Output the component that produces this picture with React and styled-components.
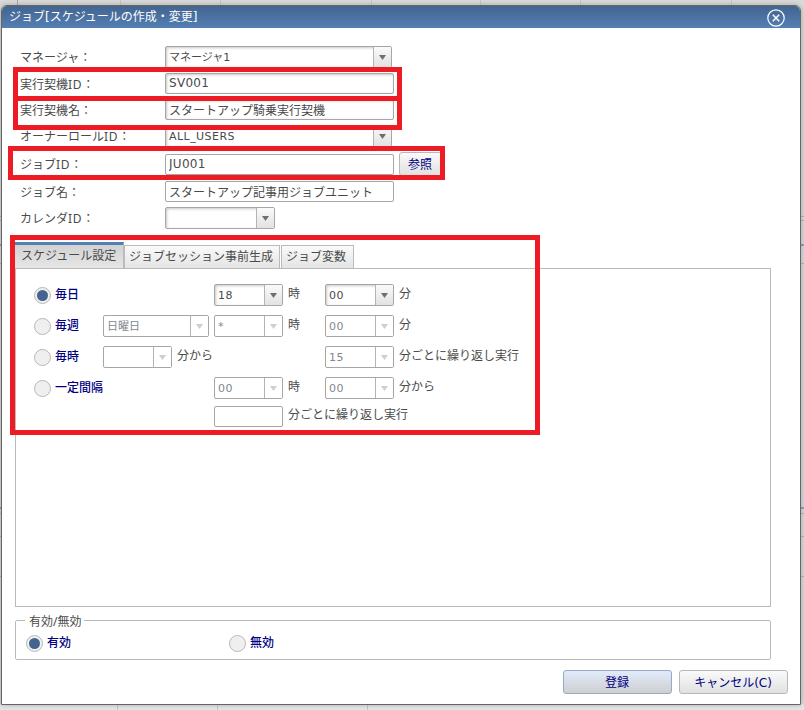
import React from "react";
import styled, { createGlobalStyle, css } from "styled-components";

const GlobalStyle = createGlobalStyle`
  * { box-sizing: border-box; }
  body {
    margin: 0;
    overflow: hidden;
    font-family: "DejaVu Sans", "Noto Sans CJK JP", sans-serif;
    font-size: 12px;
    color: #4a4a4a;
  }
  button, input { font-family: inherit; }
`;

const vline = (x, y, h, c = "#c6c6c6") =>
  `linear-gradient(${c}, ${c}) ${x}px ${y}px / 1px ${h}px no-repeat`;
const edge = (y, h, c) =>
  `linear-gradient(${c}, ${c}) 0 ${y}px / 100% ${h}px no-repeat`;

const Backdrop = styled.div`
  position: relative;
  width: 804px;
  height: 710px;
  overflow: hidden;
  padding: 5px 3px 5px 1px;
  background:
    ${vline(17, 0, 5, "#a8a8a8")},
    ${[120, 220, 371, 480, 580, 731].map((x) => vline(x, 0, 5)).join(",")},
    ${[117, 217, 367].map((x) => vline(x, 705, 5)).join(",")},
    ${[
      edge(216, 1, "#b4b4b4"),
      edge(220, 1, "#b4b4b4"),
      edge(244, 2, "#8fa3b8"),
      edge(263, 1, "#b4b4b4"),
      edge(507, 2, "#8fa3b8"),
      edge(513, 1, "#b4b4b4"),
      edge(536, 1, "#b4b4b4"),
      edge(576, 1, "#b4b4b4"),
      edge(704, 6, "#e6e6e6"),
    ].join(",")},
    #d9d9d9;
`;

const Dialog = styled.section`
  display: flex;
  flex-direction: column;
  width: 800px;
  height: 700px;
  border: 1px solid #666;
  border-radius: 6px 6px 0 0;
  background: #fff;
  box-shadow: 0 0 5px rgba(0, 0, 0, 0.25);
`;

const TitleBar = styled.header`
  display: flex;
  align-items: center;
  justify-content: space-between;
  height: 22px;
  padding: 0 15px 0 7px;
  border-radius: 5px 5px 0 0;
  background: linear-gradient(#42648f, #547fb4);
  color: #fff;
  line-height: 22px;
`;

const CloseIcon = styled.svg`
  display: block;
  width: 18px;
  height: 18px;
  margin-top: 2px;
`;

const Content = styled.div`
  display: flex;
  flex-direction: column;
  padding: 18px 12px 0 13px;
`;

const FormRow = styled.div`
  display: flex;
  align-items: center;
  height: ${(p) => p.$h}px;
  margin-bottom: ${(p) => p.$gap}px;
`;

const FieldLabel = styled.label`
  width: 150px;
  padding: 2px 0 0 5px;
  font-family: "Noto Sans", "Noto Sans CJK JP", sans-serif;
  line-height: 20px;
  white-space: nowrap;
`;

const Latin = styled.span`
  letter-spacing: 0.7px;
`;

const fieldBox = css`
  border: 1px solid #a6a6a6;
  border-radius: 2px;
  background: #fff;
  box-shadow: ${(p) => (p.$flat ? "none" : "inset 1px 1px 3px rgba(0, 0, 0, 0.22)")};
`;

const TextField = styled.input`
  ${fieldBox}
  width: ${(p) => p.$w}px;
  height: 21px;
  padding: 0 3px 1px;
  outline: none;
  color: #4a4a4a;
  font-size: 12px;
  letter-spacing: ${(p) => p.$track || 0}px;
`;

const ComboBox = styled.div`
  ${fieldBox}
  display: flex;
  width: ${(p) => p.$w}px;
  height: 22px;
  color: ${(p) => (p.$disabled ? "#7f8790" : "#4a4a4a")};
`;

const ComboValue = styled.span`
  flex: 1;
  padding-left: 3px;
  font-size: 11px;
  line-height: 21px;
  letter-spacing: ${(p) => p.$track || 0}px;
  white-space: nowrap;
`;

const ComboTrigger = styled.span`
  display: flex;
  align-items: center;
  justify-content: center;
  width: 18px;
  border-left: 1px solid #b4b4b4;
  background: ${(p) => (p.$disabled ? "#fff" : "linear-gradient(#fafafa, #e2e2e2)")};
`;

const Arrow = styled.span`
  width: 7px;
  height: 5px;
  margin-top: 1px;
  background: ${(p) => (p.$disabled ? "#cfcfcf" : "#6e6e6e")};
  clip-path: polygon(0 0, 100% 0, 50% 100%);
`;

function Combo({ value, width, disabled, track }) {
  return (
    <ComboBox $w={width} $disabled={disabled} $flat={disabled}>
      <ComboValue $track={track}>{value}</ComboValue>
      <ComboTrigger $disabled={disabled}>
        <Arrow $disabled={disabled} />
      </ComboTrigger>
    </ComboBox>
  );
}

const Button = styled.button`
  width: ${(p) => p.$w}px;
  height: 24px;
  margin-left: ${(p) => p.$ml || 0}px;
  padding: 0 1px 2px 0;
  border: 1px solid ${(p) => (p.$primary ? "#96aac6" : "#b8b8b8")};
  border-radius: 3px;
  background: ${(p) =>
    p.$primary
      ? "linear-gradient(#e0ebfb, #cfcfcf)"
      : "linear-gradient(#fafafa, #e1e1e1)"};
  color: #000080;
  font-size: 12px;
`;

const TabList = styled.div`
  display: flex;
  align-items: flex-end;
  height: 26px;
  margin-top: 13px;
`;

const Tab = styled.div`
  width: ${(p) => p.$w}px;
  height: 23px;
  margin-right: ${(p) => p.$gap || 0}px;
  padding-left: 4px;
  border: 1px solid #bbb;
  border-bottom: 0;
  background: linear-gradient(#fafafa, #e4e4e4);
  line-height: 23px;
  white-space: nowrap;
  ${(p) =>
    p.$active &&
    css`
      height: 26px;
      padding-left: 6px;
      border-top: 3px solid #547fb4;
      border-left: 0;
      background: linear-gradient(#d2d2d2, #e6e6e6);
    `}
`;

const TabPanel = styled.div`
  width: 756px;
  height: 339px;
  padding: 15px 0 0 18px;
  border: 1px solid #bbb;
`;

const ScheduleRow = styled.div`
  display: grid;
  grid-template-columns: 69px 111px 111px 1fr;
  align-items: center;
  height: 22px;
  margin-bottom: ${(p) => p.$gap ?? 9}px;
`;

const Cell = styled.div`
  display: flex;
  align-items: center;
  grid-column: ${(p) => p.$col};
`;

const Unit = styled.span`
  margin: -2px 0 0 5px;
  line-height: 20px;
  white-space: nowrap;
`;

const RadioLabel = styled.label`
  display: flex;
  align-items: center;
  gap: 4px;
  color: #000080;
  font-weight: 500;
  line-height: 17px;
  white-space: nowrap;
`;

const RadioMark = styled.span`
  flex: none;
  display: flex;
  align-items: center;
  justify-content: center;
  width: 17px;
  height: 17px;
  border: 1px solid #b8b8b8;
  border-radius: 50%;
  background: #efefef;
  &::after {
    content: "";
    width: 11px;
    height: 11px;
    border-radius: 50%;
    background: ${(p) => (p.$checked ? "#42648f" : "transparent")};
  }
`;

function Radio({ children, checked }) {
  return (
    <RadioLabel>
      <RadioMark $checked={checked} />
      <span>{children}</span>
    </RadioLabel>
  );
}

const StatusGroup = styled.fieldset`
  display: flex;
  width: 756px;
  height: 47px;
  margin: 6px 0 0;
  padding: 0 0 0 10px;
  border: 1px solid #bbb;
  border-radius: 2px;
`;

const StatusLegend = styled.legend`
  height: 14px;
  margin-left: -1px;
  padding: 0 3px 0 4px;
  font-family: "Noto Sans", "Noto Sans CJK JP", sans-serif;
  line-height: 17px;
`;

const StatusOption = styled.div`
  width: 203px;
  padding-top: 8px;
`;

const Footer = styled.footer`
  display: flex;
  justify-content: flex-end;
  gap: 7px;
  margin-top: 10px;
`;

const Highlight = styled.div`
  position: absolute;
  left: ${(p) => p.$x}px;
  top: ${(p) => p.$y}px;
  width: ${(p) => p.$w}px;
  height: ${(p) => p.$h}px;
  border: 5px solid #ed1c24;
  pointer-events: none;
`;

export default function App() {
  return (
    <Backdrop>
      <GlobalStyle />
      <Dialog>
        <TitleBar>
          <span>ジョブ[スケジュールの作成・変更]</span>
          <CloseIcon viewBox="0 0 18 18" fill="none" stroke="#fff">
            <circle cx="9" cy="9" r="8.2" strokeWidth="1.2" />
            <path d="M5.8 5.8l6.4 6.4M12.2 5.8l-6.4 6.4" strokeWidth="1.5" />
          </CloseIcon>
        </TitleBar>
        <Content>
          <FormRow $h={22} $gap={5}>
            <FieldLabel>マネージャ：</FieldLabel>
            <Combo value="マネージャ1" width={227} />
          </FormRow>
          <FormRow $h={21} $gap={5}>
            <FieldLabel>実行契機<Latin>ID</Latin>：</FieldLabel>
            <TextField $w={229} $track={0.3} defaultValue="SV001" />
          </FormRow>
          <FormRow $h={21} $gap={5}>
            <FieldLabel>実行契機名：</FieldLabel>
            <TextField $w={229} defaultValue="スタートアップ騎乗実行契機" />
          </FormRow>
          <FormRow $h={22} $gap={5}>
            <FieldLabel>オーナーロール<Latin>ID</Latin>：</FieldLabel>
            <Combo value="ALL_USERS" width={227} track={0.45} />
          </FormRow>
          <FormRow $h={24} $gap={5}>
            <FieldLabel>ジョブ<Latin>ID</Latin>：</FieldLabel>
            <TextField $w={229} $flat $track={0.3} defaultValue="JU001" />
            <Button $w={43} $ml={5}>参照</Button>
          </FormRow>
          <FormRow $h={21} $gap={5}>
            <FieldLabel>ジョブ名：</FieldLabel>
            <TextField $w={229} $flat defaultValue="スタートアップ記事用ジョブユニット" />
          </FormRow>
          <FormRow $h={22} $gap={0}>
            <FieldLabel>カレンダ<Latin>ID</Latin>：</FieldLabel>
            <Combo value="" width={110} />
          </FormRow>

          <TabList>
            <Tab $w={109} $active>スケジュール設定</Tab>
            <Tab $w={156} $gap={1}>ジョブセッション事前生成</Tab>
            <Tab $w={73}>ジョブ変数</Tab>
          </TabList>
          <TabPanel>
            <ScheduleRow>
              <Radio checked>毎日</Radio>
              <Cell $col={3}><Combo value="18" width={69} track={0.4} /><Unit>時</Unit></Cell>
              <Cell $col={4}><Combo value="00" width={69} track={0.4} /><Unit>分</Unit></Cell>
            </ScheduleRow>
            <ScheduleRow>
              <Radio>毎週</Radio>
              <Cell $col={2}><Combo value="日曜日" width={106} disabled /></Cell>
              <Cell $col={3}><Combo value="*" width={69} disabled /><Unit>時</Unit></Cell>
              <Cell $col={4}><Combo value="00" width={69} track={0.4} disabled /><Unit>分</Unit></Cell>
            </ScheduleRow>
            <ScheduleRow>
              <Radio>毎時</Radio>
              <Cell $col={2}><Combo value="" width={69} disabled /><Unit>分から</Unit></Cell>
              <Cell $col={4}><Combo value="15" width={69} track={0.4} disabled /><Unit>分ごとに繰り返し実行</Unit></Cell>
            </ScheduleRow>
            <ScheduleRow $gap={6}>
              <Radio>一定間隔</Radio>
              <Cell $col={3}><Combo value="00" width={69} track={0.4} disabled /><Unit>時</Unit></Cell>
              <Cell $col={4}><Combo value="00" width={69} track={0.4} disabled /><Unit>分から</Unit></Cell>
            </ScheduleRow>
            <ScheduleRow>
              <Cell $col="3 / 5"><TextField $w={69} $flat /><Unit>分ごとに繰り返し実行</Unit></Cell>
            </ScheduleRow>
          </TabPanel>

          <StatusGroup>
            <StatusLegend>有効/無効</StatusLegend>
            <StatusOption><Radio checked>有効</Radio></StatusOption>
            <StatusOption><Radio>無効</Radio></StatusOption>
          </StatusGroup>

          <Footer>
            <Button $w={109} $primary>登録</Button>
            <Button $w={109}>キャンセル(C)</Button>
          </Footer>
        </Content>
      </Dialog>

      <Highlight $x={13} $y={67} $w={389} $h={34} />
      <Highlight $x={13} $y={96} $w={389} $h={34} />
      <Highlight $x={8} $y={146} $w={437} $h={34} />
      <Highlight $x={10} $y={235} $w={530} $h={200} />
    </Backdrop>
  );
}
